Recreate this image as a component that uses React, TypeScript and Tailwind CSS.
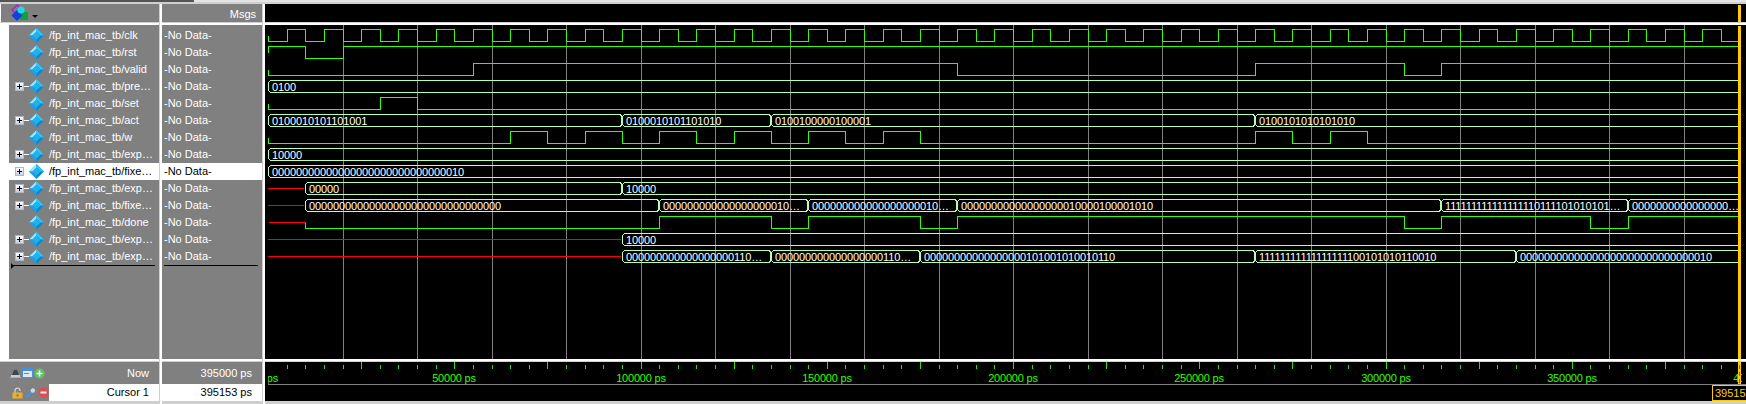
const X = (t: number) => Math.round(268 + t * 0.003725);
const GREEN = "#33ff00";
const PALE = "#b4ffb4";
const RED = "#ff0000";
const CURSOR = "#ffcc00";
const END = 1738;
const TOP = 29;
const H = 17;

const NAMES: [string, boolean][] = [
  ["clk", false], ["rst", false], ["valid", false], ["pre…", true], ["set", false], ["act", true], ["w", false],
  ["exp…", true], ["fixe…", true], ["exp…", true], ["fixe…", true], ["done", false], ["exp…", true], ["exp…", true],
];

const rep = (c: string, n: number) => c.repeat(n);

type Logic = { kind: "logic"; row: number; start: 0 | 1; toggles: number[]; redUntil?: number };
type Bus = { kind: "bus"; row: number; segs: [number, string][]; redUntil?: number };

const clkToggles: number[] = [];
for (let t = 5000; t < 395000; t += 5000) clkToggles.push(t);

const SIGNALS: (Logic | Bus)[] = [
  { kind: "logic", row: 0, start: 0, toggles: clkToggles },
  { kind: "logic", row: 1, start: 1, toggles: [10000, 20000] },
  { kind: "logic", row: 2, start: 0, toggles: [55000, 185000, 265000, 305000, 315000] },
  { kind: "bus", row: 3, segs: [[0, "0100"]] },
  { kind: "logic", row: 4, start: 0, toggles: [30000, 40000] },
  { kind: "bus", row: 5, segs: [[0, "0100010101101001"], [95000, "0100010101101010"], [135000, "0100100000100001"], [265000, "0100101010101010"]] },
  { kind: "logic", row: 6, start: 0, toggles: [65000, 75000, 85000, 95000, 105000, 115000, 125000, 135000, 145000, 155000, 165000, 175000, 265000, 275000, 285000, 295000] },
  { kind: "bus", row: 7, segs: [[0, "10000"]] },
  { kind: "bus", row: 8, segs: [[0, rep("0", 30) + "10"]] },
  { kind: "bus", row: 9, redUntil: 10000, segs: [[10000, "00000"], [95000, "10000"]] },
  {
    kind: "bus", row: 10, redUntil: 10000,
    segs: [
      [10000, rep("0", 32)],
      [105000, rep("0", 19) + "10…"],
      [145000, rep("0", 19) + "10…"],
      [185000, rep("0", 18) + "10000100001010"],
      [315000, rep("1", 17) + "01111010101" + "01…"],
      [365000, rep("0", 16) + "…"],
    ],
  },
  { kind: "logic", row: 11, start: 0, redUntil: 10000, toggles: [105000, 135000, 145000, 175000, 185000, 305000, 315000, 355000, 365000] },
  { kind: "bus", row: 12, redUntil: 95000, segs: [[95000, "10000"]] },
  {
    kind: "bus", row: 13, redUntil: 95000,
    segs: [
      [95000, rep("0", 18) + "110…"],
      [135000, rep("0", 18) + "110…"],
      [175000, rep("0", 17) + "101001010010110"],
      [265000, rep("1", 18) + "00101010110010"],
      [335000, rep("0", 30) + "10"],
    ],
  },
];

function LogicWave({ s }: { s: Logic }) {
  const high = TOP + s.row * H + 0.5;
  const low = high + 12;
  const mid = high + 6;
  const from = s.redUntil ? X(s.redUntil) : 268;
  let level = s.start;
  let d = s.redUntil
    ? `M${from + 0.5} ${level ? high : low}`
    : `M${from + 0.5} ${mid}L${from + 0.5} ${level ? high : low}`;
  for (const t of s.toggles) {
    if (s.redUntil && t <= s.redUntil) continue;
    const x = X(t) + 0.5;
    d += `L${x} ${level ? high : low}`;
    level = level ? 0 : 1;
    d += `L${x} ${level ? high : low}`;
  }
  d += `L${END} ${level ? high : low}`;
  return (
    <g>
      {s.redUntil ? (
        <>
          <path d={`M269 ${mid}L${from + 0.5} ${mid}`} stroke={RED} />
          <path d={`M${from + 0.5} ${mid}L${from + 0.5} ${low}`} stroke={GREEN} />
        </>
      ) : null}
      <path d={d} stroke={GREEN} fill="none" />
      <rect x={END} y={(level ? high : low) - 0.5} width={1} height={1} fill="#ff3030" />
    </g>
  );
}

function BusWave({ s }: { s: Bus }) {
  const y0 = TOP + s.row * H + 0.5;
  const y1 = y0 + 12;
  const mid = y0 + 6;
  return (
    <g>
      {s.redUntil ? <path d={`M268 ${mid}L${X(s.redUntil) - 1} ${mid}`} stroke={RED} /> : null}
      {s.segs.map(([t, text], i) => {
        const a = X(t);
        const next = s.segs[i + 1];
        const b = next ? X(next[0]) : END;
        const d = next
          ? `M${a + 2.5} ${y0}L${b - 1.5} ${y0}L${b - 0.5} ${y0 + 2}L${b - 0.5} ${y1 - 2}L${b - 1.5} ${y1}L${a + 2.5} ${y1}L${a + 0.5} ${y1 - 2}L${a + 0.5} ${y0 + 2}Z`
          : `M${END} ${y0}L${a + 2.5} ${y0}L${a + 0.5} ${y0 + 2}L${a + 0.5} ${y1 - 2}L${a + 2.5} ${y1}L${END} ${y1}`;
        return (
          <g key={i}>
            <path d={d} stroke={PALE} fill="none" />
            <text x={a + 4} y={y1 - 1.5} fontSize={11} letterSpacing="-0.12" fill="#fff" stroke="none">
              {text}
            </text>
          </g>
        );
      })}
      <rect x={END} y={y0 - 0.5} width={1} height={1} fill="#4040ff" />
      <rect x={END} y={y1 - 0.5} width={1} height={1} fill="#4040ff" />
    </g>
  );
}

function Waves() {
  const grid: number[] = [];
  for (let t = 20000; t <= 380000; t += 20000) grid.push(X(t));
  return (
    <svg width={1481} height={334} viewBox="265 25 1481 334" className="block" shapeRendering="crispEdges">
      {grid.map((x) => (
        <rect key={x} x={x} y={25} width={1} height={334} fill="#808080" />
      ))}
      {SIGNALS.map((s) => (s.kind === "logic" ? <LogicWave key={s.row} s={s} /> : <BusWave key={s.row} s={s} />))}
      <rect x={1738} y={26} width={3} height={333} fill={CURSOR} />
    </svg>
  );
}

function Axis() {
  const ticks: number[] = [];
  for (let t = 5000; t <= 395000; t += 5000) ticks.push(t);
  const labels: number[] = [];
  for (let t = 0; t <= 400000; t += 50000) labels.push(t);
  return (
    <svg width={1481} height={39} viewBox="265 362 1481 39" className="block">
      <defs>
        <clipPath id="axisclip">
          <rect x={268} y={362} width={1474} height={22} />
        </clipPath>
      </defs>
      <g shapeRendering="crispEdges">
        {ticks.map((t) => (
          <rect key={t} x={X(t)} y={t % 25000 === 0 ? 362 : 365} width={1} height={t % 25000 === 0 ? 7 : 4} fill="#33e000" />
        ))}
        <rect x={268} y={384} width={1478} height={1} fill="#808080" />
      </g>
      <g clipPath="url(#axisclip)">
        {labels.map((t) => (
          <text key={t} x={X(t)} y={382} fontSize={11} letterSpacing="-0.2" fill="#33ff00" textAnchor="middle">
            {t} ps
          </text>
        ))}
      </g>
      <g shapeRendering="crispEdges">
        <rect x={1738} y={362} width={3} height={22} fill={CURSOR} />
        <path d="M1739.5 365V384" stroke="#ff2000" strokeDasharray="4 3" />
        <rect x={1712.5} y={385.5} width={40} height={15} fill="none" stroke={CURSOR} />
      </g>
      <text x={1715} y={397} fontSize={11} fill={CURSOR}>
        395153
      </text>
    </svg>
  );
}

function Diamond() {
  return (
    <svg width={15} height={15} viewBox="0 0 15 15" className="block shrink-0">
      <polygon points="7.5,0 15,7.5 7.5,15 0,7.5" fill="#0f86c9" />
      <polygon points="7.5,0 0,7.5 3.5,7.5 7.5,3.5" fill="#9ae8ff" />
      <polygon points="7.5,0 15,7.5 11.5,7.5 7.5,3.5" fill="#34c4f2" />
      <polygon points="0,7.5 7.5,15 7.5,11.5 3.5,7.5" fill="#2a9bdc" />
      <polygon points="7.5,3.5 11.5,7.5 7.5,11.5 3.5,7.5" fill="#1cb4ee" />
    </svg>
  );
}

function Expand() {
  return (
    <div className="flex items-center w-[14px] shrink-0">
      <div className="relative w-[9px] h-[9px] bg-gradient-to-b from-white to-[#c8cfe0] border border-[#b0b8c8] shrink-0">
        <div className="absolute left-[1px] right-[1px] top-[3px] h-px bg-black" />
        <div className="absolute top-[1px] bottom-[1px] left-[3px] w-px bg-black" />
      </div>
      <div className="h-px w-[5px] bg-white" />
    </div>
  );
}

function HeaderIcon() {
  return (
    <svg width={17} height={18} viewBox="0 0 17 18" className="block">
      <polygon points="6,0 12,6 6,12 0,6" fill="#b020c8" />
      <polygon points="6,2 10,6 6,10 2,6" fill="#808080" />
      <rect x={9} y={8} width={8} height={8} fill="#10a040" />
      <polygon points="6,6 11.5,11.5 6,17 0.5,11.5" fill="#1040e0" />
      <circle cx={10} cy={6} r={3.5} fill="#20d8f0" />
    </svg>
  );
}

function NowIcons() {
  return (
    <div className="flex items-center gap-[1px]">
      <svg width={11} height={11} viewBox="0 0 11 11" className="block">
        <rect x={0} y={9} width={11} height={1} fill="#8fb4e0" />
        <path d="M2 7 L4 2 L7 2 L9 7 Z" fill="#3f4650" />
        <rect x={1} y={7} width={9} height={2} fill="#c8ccd2" />
      </svg>
      <svg width={11} height={11} viewBox="0 0 11 11" className="block">
        <rect x={0} y={0} width={11} height={10} fill="#4f8fd8" />
        <rect x={1} y={3} width={9} height={6} fill="#dce8f6" />
        <rect x={2} y={5} width={5} height={1} fill="#4f8fd8" />
      </svg>
      <svg width={11} height={11} viewBox="0 0 11 11" className="block">
        <circle cx={5.5} cy={5.5} r={5.2} fill="#62c062" />
        <path d="M2.5 5.5H8.5M5.5 2.5V8.5" stroke="#e8ffe8" strokeWidth={1.6} />
      </svg>
    </div>
  );
}

function CursorIcons() {
  return (
    <div className="flex items-center gap-[2px]">
      <svg width={11} height={12} viewBox="0 0 11 12" className="block">
        <path d="M3 6V3.5a2.5 2.5 0 0 1 5 0V4" stroke="#d8d8d8" strokeWidth={1.2} fill="none" />
        <rect x={0.5} y={5.5} width={10} height={6} fill="#e8b030" />
        <rect x={4.5} y={7.5} width={2} height={2} fill="#a07010" />
      </svg>
      <svg width={11} height={12} viewBox="0 0 11 12" className="block">
        <path d="M1.5 10.5 L7 5" stroke="#4f8fd8" strokeWidth={2.6} />
        <path d="M7 1.5a3 3 0 0 1 3 1 L8 4.5 L8.5 3 Z" fill="#d8e4f2" />
        <circle cx={7.8} cy={3.6} r={2.2} fill="#c8d8ec" />
      </svg>
      <svg width={11} height={11} viewBox="0 0 11 11" className="block">
        <circle cx={5.5} cy={5.5} r={5.2} fill="#d85050" />
        <rect x={2.5} y={4.5} width={6} height={2} fill="#ffe8e8" />
      </svg>
    </div>
  );
}

export default function App() {
  return (
    <div className="w-[1746px] h-[404px] overflow-hidden bg-white text-[11px] text-white font-['Liberation_Sans',sans-serif]">
      <div className="flex h-[2px]">
        <div className="w-[194px] bg-[#555555]" />
        <div className="flex-1 bg-[#e4e4e4]" />
      </div>
      <div className="h-[2px] bg-[#cfcfcf]" />

      <div className="flex h-[400px]">
        {/* Names */}
        <div className="w-[159px] flex flex-col shrink-0">
          <div className="h-[18px] bg-[#808080] border-l border-white flex items-center pl-[10px]">
            <HeaderIcon />
            <div className="ml-[4px] mt-[6px] w-0 h-0 border-x-[3px] border-x-transparent border-t-[3px] border-t-black" />
          </div>
          <div className="h-[3px] bg-white border-t border-[#cfcfcf]" />
          <div className="h-[334px] flex">
            <div className="w-[9px] bg-white" />
            <div className="relative flex-1 bg-[#808080] pt-[2px]">
              {NAMES.map(([n, exp], i) => (
                <div key={i} className={`flex items-center h-[17px] pl-[6px] ${i === 8 ? "bg-white text-black" : ""}`}>
                  {exp ? <Expand /> : <div className="w-[14px] shrink-0" />}
                  <Diamond />
                  <span className="ml-[5px] whitespace-nowrap leading-[17px]">/fp_int_mac_tb/{n}</span>
                </div>
              ))}
              <div className="ml-[4px] w-[142px] h-px bg-black" />
              <div className="absolute left-[2px] top-[238px] w-0 h-0 border-y-[3px] border-y-transparent border-l-[3px] border-l-black" />
            </div>
          </div>
          <div className="h-[3px] bg-white border-b border-[#cfcfcf]" />
          <div className="h-[22px] bg-[#808080] flex items-center pl-[10px] pr-[10px] justify-between">
            <NowIcons />
            <span>Now</span>
          </div>
          <div className="h-[17px] flex">
            <div className="w-[49px] bg-[#808080] flex items-center pl-[12px]">
              <CursorIcons />
            </div>
            <div className="flex-1 bg-white text-black text-right pr-[10px] leading-[17px]">Cursor 1</div>
          </div>
          <div className="h-[3px] bg-[#cfcfcf]" />
        </div>

        <div className="w-[3px] bg-white border-l border-[#cfcfcf] shrink-0" />

        {/* Messages */}
        <div className="w-[100px] flex flex-col shrink-0">
          <div className="h-[18px] bg-[#808080] text-right pr-[6px] leading-[20px]">Msgs</div>
          <div className="h-[3px] bg-white border-t border-[#cfcfcf]" />
          <div className="h-[334px] bg-[#808080] pt-[2px]">
            {NAMES.map((_, i) => (
              <div key={i} className={`h-[17px] pl-[2px] leading-[17px] ${i === 8 ? "bg-white text-black" : ""}`}>
                -No Data-
              </div>
            ))}
            <div className="ml-[2px] w-[94px] h-px bg-black" />
          </div>
          <div className="h-[3px] bg-white border-b border-[#cfcfcf]" />
          <div className="h-[22px] bg-[#808080] text-right pr-[10px] leading-[22px]">395000 ps</div>
          <div className="h-[17px] bg-white text-black text-right pr-[10px] leading-[17px]">395153 ps</div>
          <div className="h-[3px] bg-[#cfcfcf]" />
        </div>

        <div className="w-[3px] bg-white border-l border-[#cfcfcf] shrink-0" />

        {/* Waves */}
        <div className="flex-1 flex flex-col min-w-0">
          <div className="h-[18px] bg-black flex justify-end pr-[5px] pt-px">
            <div className="w-[3px] bg-[#ffcc00]" />
          </div>
          <div className="h-[3px] bg-white border-t border-[#cfcfcf]" />
          <div className="h-[334px] bg-black">
            <Waves />
          </div>
          <div className="h-[3px] bg-white border-b border-[#cfcfcf]" />
          <div className="h-[39px] bg-black">
            <Axis />
          </div>
          <div className="h-[3px] bg-[#cfcfcf]" />
        </div>
      </div>
    </div>
  );
}
